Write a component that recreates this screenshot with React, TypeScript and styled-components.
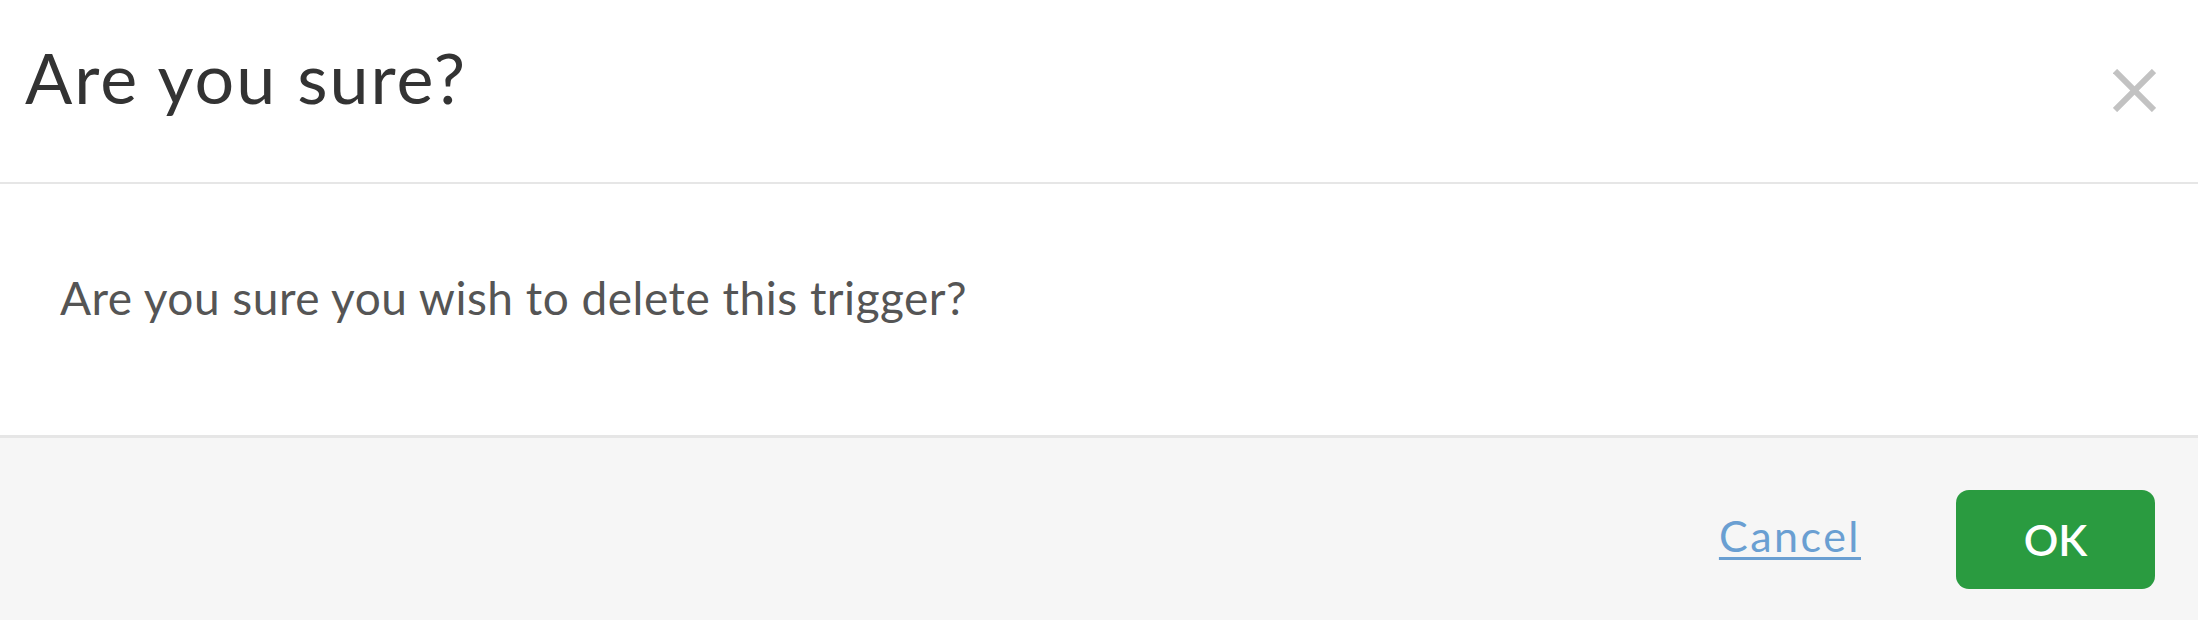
import React from "react";
import styled, { createGlobalStyle } from "styled-components";

// Styles globaux de la page
const GlobalStyle = createGlobalStyle`
  html, body {
    margin: 0;
    padding: 0;
    background: #ffffff;
  }
  #root {
    height: 620px;
  }
`;

// Icône de fermeture
const CloseIcon: React.FC = () => (
  <svg width="43" height="43" viewBox="0 0 43 43">
    <g stroke="#c2c2c2" strokeWidth="6" strokeLinecap="butt">
      <line x1="2" y1="2" x2="41" y2="41" />
      <line x1="41" y1="2" x2="2" y2="41" />
    </g>
  </svg>
);

// Boîte de dialogue de confirmation
const App: React.FC = () => {
  return (
    <>
      <GlobalStyle />
      <Dialog>
        <Header>
          <Title>{"Are you sure?"}</Title>
          <CloseButton aria-label={"Close"}>
            <CloseIcon />
          </CloseButton>
        </Header>
        <Body>
          <Message>{"Are you sure you wish to delete this trigger?"}</Message>
        </Body>
        <Footer>
          <LinkButton href={"#"}>{"Cancel"}</LinkButton>
          <PrimaryButton>{"OK"}</PrimaryButton>
        </Footer>
      </Dialog>
    </>
  );
};

const Dialog = styled.div`
  height: 620px;
  display: flex;
  flex-direction: column;
  font-family: Lato, "Open Sans", sans-serif;
  overflow: hidden;
`;

const Header = styled.div`
  box-sizing: border-box;
  height: 184px;
  display: flex;
  align-items: flex-start;
  justify-content: space-between;
  padding: 42px 42px 0 25px;
  border-bottom: 2px solid #e6e6e6;
`;

const Title = styled.h1`
  margin: 0;
  font-size: 70px;
  line-height: 1;
  font-weight: 400;
  letter-spacing: 2px;
  color: #333333;
`;

const CloseButton = styled.button`
  margin-top: 27px;
  padding: 0;
  border: 0;
  background: none;
  width: 43px;
  height: 43px;
  cursor: pointer;
  filter: blur(0.6px);
`;

const Body = styled.div`
  box-sizing: border-box;
  height: 251px;
  padding: 91px 0 0 60px;
`;

const Message = styled.p`
  margin: 0;
  font-size: 46px;
  line-height: 1;
  letter-spacing: 0.5px;
  color: #555555;
`;

const Footer = styled.div`
  flex: 1;
  display: flex;
  align-items: flex-start;
  justify-content: flex-end;
  gap: 95px;
  padding: 52px 43px 0 0;
  background: #f6f6f6;
  border-top: 3px solid #e6e6e6;
`;

const LinkButton = styled.a`
  margin-top: 24px;
  font-size: 43px;
  line-height: 1;
  letter-spacing: 2.5px;
  color: #6a9fd2;
  text-decoration: underline;
  text-decoration-thickness: 3px;
  text-underline-offset: 5px;
`;

const PrimaryButton = styled.button`
  width: 199px;
  height: 99px;
  border: 0;
  border-radius: 13px;
  background: #2a9b40;
  color: #ffffff;
  font-family: Lato, "Open Sans", sans-serif;
  font-size: 43px;
  font-weight: 600;
  cursor: pointer;
`;

export default App;
